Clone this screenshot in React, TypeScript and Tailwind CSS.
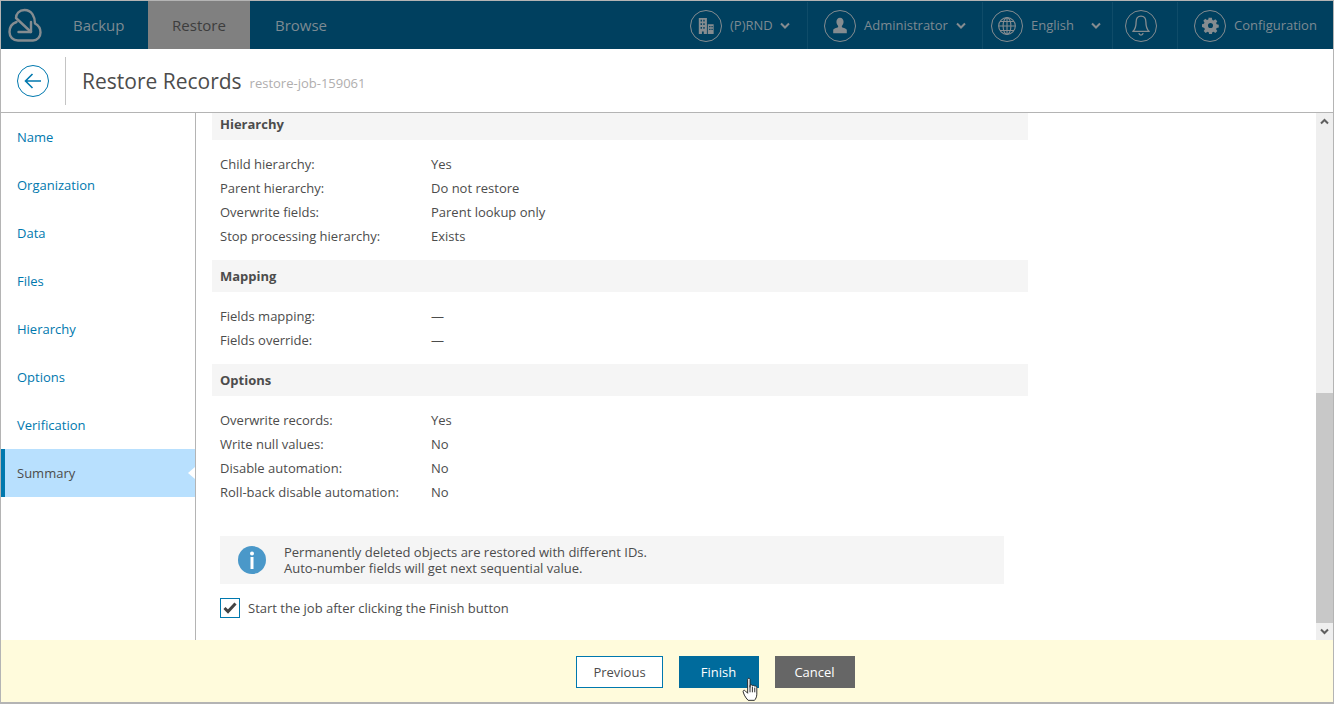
import React from "react";

const font = "font-['Open_Sans',sans-serif]";

const sideItems = ["Name", "Organization", "Data", "Files", "Hierarchy", "Options", "Verification", "Summary"];

const sections = [
  {
    title: "Hierarchy",
    cut: true,
    rows: [
      ["Child hierarchy:", "Yes"],
      ["Parent hierarchy:", "Do not restore"],
      ["Overwrite fields:", "Parent lookup only"],
      ["Stop processing hierarchy:", "Exists"],
    ],
  },
  {
    title: "Mapping",
    rows: [
      ["Fields mapping:", "—"],
      ["Fields override:", "—"],
    ],
  },
  {
    title: "Options",
    rows: [
      ["Overwrite records:", "Yes"],
      ["Write null values:", "No"],
      ["Disable automation:", "No"],
      ["Roll-back disable automation:", "No"],
    ],
  },
];

const Chevron = () => (
  <svg width="10" height="8" viewBox="0 0 10 8" fill="none" stroke="#858c90" strokeWidth="2">
    <path d="M1 1.500 5 5.500 9 1.500" />
  </svg>
);

const Circle = ({ children }: { children: React.ReactNode }) => (
  <span className="flex h-8 w-8 shrink-0 items-center justify-center rounded-full border border-[#858c90]">
    {children}
  </span>
);

const App = () => {
  return (
    <div className={`${font} flex h-[704px] w-[1334px] flex-col overflow-hidden border border-t-0 border-[#b4b4b4] text-[13px] text-[#4c4c4c]`}>
      {/* top nav */}
      <div className="flex h-[49px] shrink-0 border-t border-[#b4b4b4] bg-[#00405f] text-[#7d8a92]">
        <div className="flex w-[147px] items-center pl-[7px]">
          <svg width="34" height="34" viewBox="0 0 34 34" fill="none" stroke="#858c90" strokeWidth="2.400" strokeLinecap="round" strokeLinejoin="round">
            <path d="M8.500 14C4 15.500 1.500 19.500 1.500 24c0 5 3.500 8.500 8.500 8.500h15c4.500 0 7.500-4 7.500-8 0-4-2.500-7.500-5.500-9C27 9 24 2 16.500 2 11 2 8 6 8 10l15 14" />
            <path d="M10.500 24H23V14" />
          </svg>
          <span className="ml-[31px] text-[15px]">Backup</span>
        </div>
        <div className="flex w-[102px] items-center justify-center bg-[#808080] text-[15px] text-[#3d3d3d]">Restore</div>
        <div className="flex items-center pl-[25px] text-[15px]">Browse</div>
        <div className="ml-auto flex pt-[1px]">
          <div className="flex w-[118px] items-center border-r border-[#0f4c69]">
            <Circle>
              <svg width="18" height="18" viewBox="0 0 20 20" fill="#858c90">
                <path fillRule="evenodd" d="M2 1h9v18H7.500v-3h-2v3H2V1Zm2 2v2h1.500V3H4Zm3 0v2h1.500V3H7ZM4 7v2h1.500V7H4Zm3 0v2h1.500V7H7Zm-3 4v2h1.500v-2H4Zm3 0v2h1.500v-2H7Z" />
                <path fillRule="evenodd" d="M12 8h6.500v11H12V8Zm1.500 2v1.500H15V10h-1.500Zm2.500 0v1.500h1.500V10H16Zm-2.500 3v1.500H15V13h-1.500Zm2.500 0v1.500h1.500V13H16Z" />
              </svg>
            </Circle>
            <span className="ml-[8px]">(P)RND</span>
            <span className="ml-[7px]"><Chevron /></span>
          </div>
          <div className="flex w-[175px] items-center border-r border-[#0f4c69] pl-[16px]">
            <Circle>
              <svg width="16" height="17" viewBox="0 0 18 20" fill="#858c90">
                <path d="M9 1c2.600 0 4.200 2 4.200 4.700 0 2-.8 3.800-2 4.800v1.400c0 .6 4.800 1.500 5.800 3.100V19H1v-4c1-1.600 5.800-2.500 5.800-3.100v-1.400c-1.200-1-2-2.800-2-4.800C4.800 3 6.400 1 9 1Z" />
              </svg>
            </Circle>
            <span className="ml-[8px]">Administrator</span>
            <span className="ml-[8px]"><Chevron /></span>
          </div>
          <div className="flex w-[130px] items-center border-r border-[#0f4c69] pl-[8px]">
            <Circle>
              <svg width="20" height="20" viewBox="0 0 18 18" fill="none" stroke="#858c90" strokeWidth="1">
                <circle cx="9" cy="9" r="7.500" />
                <ellipse cx="9" cy="9" rx="3.500" ry="7.500" />
                <path d="M9 1.500v15M1.500 9h15M2.700 5h12.600M2.700 13h12.600" />
              </svg>
            </Circle>
            <span className="ml-[8px] w-[60px]">English</span>
            <Chevron />
          </div>
          <div className="flex w-[65px] items-center border-r border-[#0f4c69] pl-[12px]">
            <Circle>
              <svg width="20" height="24" viewBox="0 0 18 22" fill="none" stroke="#858c90" strokeWidth="1.200" strokeLinejoin="round">
                <path d="M9 2c3 0 4.500 2.500 4.500 5.500 0 4 .8 6.500 3 8.500H1.500c2.200-2 3-4.500 3-8.500C4.500 4.500 6 2 9 2Z" />
                <path d="M7 17.500c.3 1.200 1 1.800 2 1.800s1.700-.6 2-1.800" />
              </svg>
            </Circle>
          </div>
          <div className="flex w-[155px] items-center pl-[16px]">
            <Circle>
              <svg width="17" height="17" viewBox="0 0 20 20" fill="#858c90">
                <path fillRule="evenodd" d="M8.400 1h3.200l.5 2.500 1.500.6 2.100-1.400 2.300 2.300-1.400 2.100.6 1.500 2.500.5v3.200l-2.500.5-.6 1.500 1.400 2.100-2.300 2.300-2.100-1.400-1.500.6-.5 2.500H8.400l-.5-2.500-1.500-.6-2.100 1.400-2.300-2.300 1.400-2.100-.6-1.500L-.2 11.700V8.500l2.500-.5.6-1.500-1.400-2.100 2.300-2.300 2.100 1.400 1.500-.6.500-2.400ZM10 7a3 3 0 1 0 0 6 3 3 0 0 0 0-6Z" />
              </svg>
            </Circle>
            <span className="ml-[8px]">Configuration</span>
          </div>
        </div>
      </div>

      {/* title bar */}
      <div className="flex h-[64px] shrink-0 items-center border-b border-[#b4b4b4] bg-white">
        <div className="flex h-[48px] w-[65px] items-center justify-center border-r border-[#c4c4c4]">
          <span className="flex h-8 w-8 items-center justify-center rounded-full border border-[#0078ae]">
            <svg width="18" height="16" viewBox="0 0 18 16" fill="none" stroke="#0078ae" strokeWidth="1.600">
              <path d="M8.500 1 1.500 8l7 7M1.500 8H17" />
            </svg>
          </span>
        </div>
        <span className="ml-[16px] pt-[3px] text-[21px] text-[#4c4c4c]">Restore Records</span>
        <span className="ml-[8px] mt-[6px] text-[13px] text-[#b0aeae]">restore-job-159061</span>
      </div>

      {/* middle */}
      <div className="flex min-h-0 flex-1">
        <div className="flex w-[195px] shrink-0 flex-col border-r border-[#b4b4b4]">
          {sideItems.map((item) =>
            item === "Summary" ? (
              <div key={item} className="relative flex h-[48px] shrink-0 items-center border-l-[4px] border-[#0078ae] bg-[#b8e0fe] pl-[12px] pt-[2px]">
                {item}
                <svg className="absolute right-0 top-[18px]" width="7" height="12" viewBox="0 0 7 12" fill="#fff">
                  <path d="M7 0 0 6l7 6Z" />
                </svg>
              </div>
            ) : (
              <div key={item} className="flex h-[48px] shrink-0 items-center pl-[16px] pt-[2px] text-[#0078ae]">
                {item}
              </div>
            ),
          )}
        </div>

        <div className="flex min-w-0 flex-1">
          <div className="w-[1120px] overflow-hidden pl-[16px]">
            {sections.map((s) => (
              <div key={s.title} className="w-[816px]">
                <div className={`flex items-center bg-[#f5f5f5] pl-[8px] font-bold ${s.cut ? "h-[27px] pb-[3px]" : "h-[32px] pt-[2px]"}`}>{s.title}</div>
                <div className="pb-[12px] pl-[8px] pt-[12px]">
                  {s.rows.map((r) => (
                    <div key={r[0]} className="flex h-[24px] items-center pt-[2px]">
                      <span className="w-[211px]">{r[0]}</span>
                      <span>{r[1]}</span>
                    </div>
                  ))}
                </div>
              </div>
            ))}
            <div className="ml-[8px] mt-[20px] flex h-[48px] w-[784px] items-center bg-[#f5f5f5] pl-[18px] leading-[16px]">
              <svg width="28" height="28" viewBox="0 0 28 28">
                <circle cx="14" cy="14" r="14" fill="#4a98c9" />
                <circle cx="14" cy="7.500" r="2" fill="#fff" />
                <rect x="12.500" y="11" width="3" height="12" fill="#fff" />
              </svg>
              <div className="ml-[18px]">
                <div>Permanently deleted objects are restored with different IDs.</div>
                <div>Auto-number fields will get next sequential value.</div>
              </div>
            </div>
            <div className="ml-[8px] mt-[14px] flex items-center">
              <span className="flex h-[20px] w-[20px] items-center justify-center border border-[#0078ae]">
                <svg width="14" height="12" viewBox="0 0 14 12" fill="none" stroke="#444444" strokeWidth="3">
                  <path d="M1.500 6 5 9.500 12.500 1.500" />
                </svg>
              </span>
              <span className="ml-[8px] leading-[20px]">Start the job after clicking the Finish button</span>
            </div>
          </div>

          {/* scrollbar */}
          <div className="flex w-[17px] shrink-0 flex-col bg-[#efefef]">
            <div className="flex h-[17px] items-center justify-center">
              <svg width="9" height="7" viewBox="0 0 9 7" fill="none" stroke="#5f5f5f" strokeWidth="2">
                <path d="M1 5.500 4.500 2 8 5.500" />
              </svg>
            </div>
            <div className="mt-[263px] h-[230px] bg-[#c8c8c8]" />
            <div className="flex h-[17px] items-center justify-center">
              <svg width="9" height="7" viewBox="0 0 9 7" fill="none" stroke="#5f5f5f" strokeWidth="2">
                <path d="M1 1.500 4.500 5 8 1.500" />
              </svg>
            </div>
          </div>
        </div>
      </div>

      {/* footer */}
      <div className="relative flex h-[63px] shrink-0 items-center justify-center gap-4 border-b border-[#b4b4b4] bg-[#fffbdc] pl-[96px] pt-[2px]">
        <button className="flex h-[32px] w-[87px] items-center justify-center border border-[#0078ae] bg-white pl-[1px] pt-[1px]">Previous</button>
        <button className="flex h-[32px] w-[80px] items-center justify-center bg-[#006b9c] pt-[1px] text-white">Finish</button>
        <button className="flex h-[32px] w-[80px] items-center justify-center bg-[#666666] pt-[1px] text-white">Cancel</button>
        <svg className="absolute left-[741px] top-[37px]" width="17" height="24" viewBox="0 0 18 25" fill="#fff" stroke="#222" strokeWidth="1" strokeLinejoin="round">
          <path d="M6 2.500c0-1.800 2.500-1.800 2.500 0V11l0-2.500c.8-.8 2.200-.6 2.500.5.800-.6 2.200-.4 2.500.6.800-.5 2-.2 2.200 1V18c0 3-1.500 5.500-2.500 6.500H6.500C5 23 3.500 21 2.500 19L1.200 15.500c-.4-1.500 1.200-2.200 2.300-1L6 17V2.500Z" />
          <path d="M8.500 11v5M11 10v6M13.500 11v5" fill="none" />
        </svg>
      </div>
    </div>
  );
};

export default App;
